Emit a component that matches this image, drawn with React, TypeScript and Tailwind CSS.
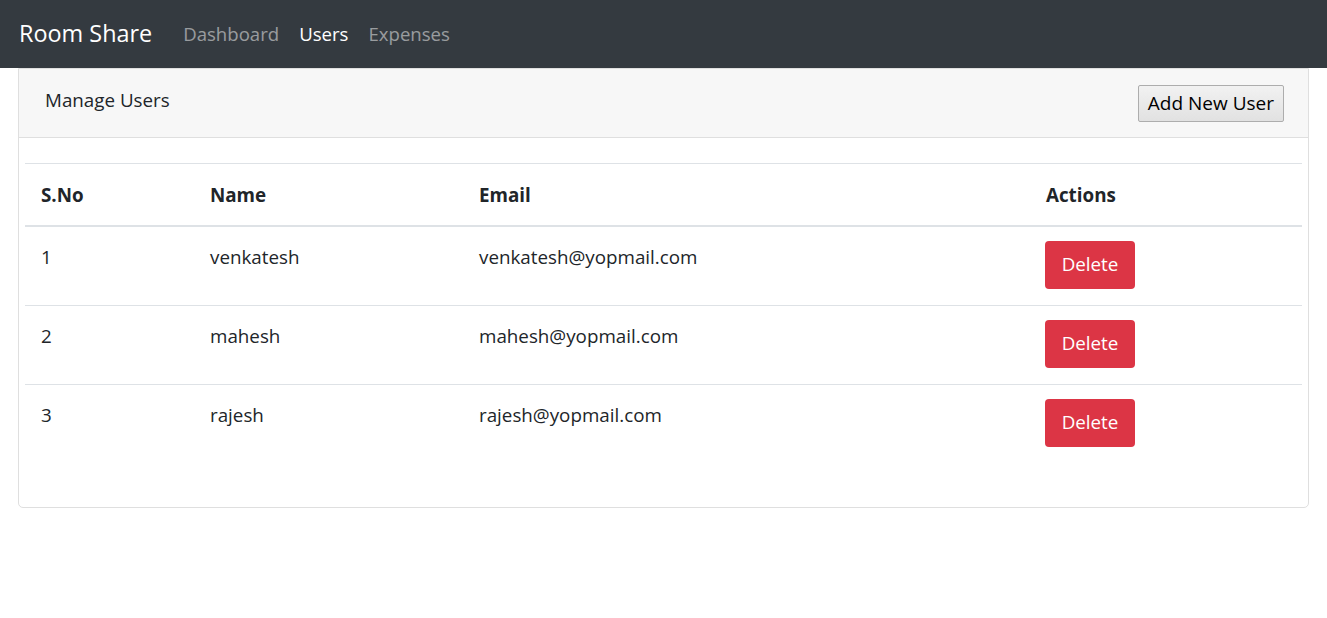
import React from 'react';

const users = [
  { id: 1, name: 'venkatesh', email: 'venkatesh@yopmail.com' },
  { id: 2, name: 'mahesh', email: 'mahesh@yopmail.com' },
  { id: 3, name: 'rajesh', email: 'rajesh@yopmail.com' },
];

const App: React.FC = () => {
  return (
    <div className="min-h-[618px] bg-white text-[#212529] font-['Open_Sans',sans-serif] text-[18.8px]">
      <nav className="h-[68px] bg-[#343a40] flex items-center px-[19px]">
        <span className="text-white text-[23.4px] mr-[21px]">Room Share</span>
        <a className="px-[10px] text-white/50 text-[18.6px]">Dashboard</a>
        <a className="px-[10px] text-white text-[18.6px]">Users</a>
        <a className="px-[10px] text-white/50 text-[18.6px]">Expenses</a>
      </nav>

      <div className="px-[18px]">
        <div className="border border-[#dfdfdf] rounded-b-[5px]">
          <div className="h-[69px] bg-[#f7f7f7] border-b border-[#dfdfdf] flex items-center justify-between pl-[26px] pr-[24px]">
            <span className="-mt-[5px]">Manage Users</span>
            <button className="h-[37px] px-[9px] mt-[1px] border border-[#adadad] bg-gradient-to-b from-[#f2f2f2] to-[#e1e1e1] rounded-[2px] text-[19px] text-black">
              Add New User
            </button>
          </div>

          <div className="px-[6px] pt-[25px] pb-[44px]">
            <table className="w-full border-collapse text-left">
              <thead>
                <tr className="border-t border-[#dee2e6] border-b-2">
                  <th className="w-[170px] pl-[16px] h-[62px] pt-[1px] font-bold">S.No</th>
                  <th className="w-[269px] pl-[15px] pt-[1px] font-bold">Name</th>
                  <th className="w-[567px] pl-[15px] pt-[1px] font-bold">Email</th>
                  <th className="pl-[15px] pt-[1px] font-bold">Actions</th>
                </tr>
              </thead>
              <tbody>
                {users.map((u) => (
                  <tr key={u.id} className="border-b border-[#dee2e6] last:border-b-0 align-top">
                    <td className="pl-[16px] pt-[16px]">{u.id}</td>
                    <td className="pl-[15px] pt-[16px]">{u.name}</td>
                    <td className="pl-[15px] pt-[16px]">{u.email}</td>
                    <td className="pl-[14px] pt-[14px] pb-[16px]">
                      <button className="w-[90px] h-[48px] rounded-[4px] bg-[#dc3545] text-white">
                        Delete
                      </button>
                    </td>
                  </tr>
                ))}
              </tbody>
            </table>
          </div>
        </div>
      </div>
    </div>
  );
};

export default App;
